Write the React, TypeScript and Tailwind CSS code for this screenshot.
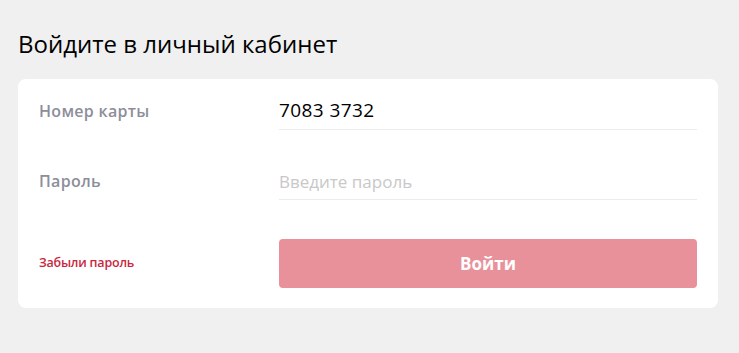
export default function App() {
  return (
    <div
      className="min-h-screen w-full bg-[#f0f0f0] px-[18px] pt-[28px]"
      style={{ fontFamily: '"Open Sans", "Noto Sans", sans-serif' }}
    >
      <h1 className="text-[24px] leading-[32px] font-medium text-black">Войдите в личный кабинет</h1>
      <div className="mt-[19px] w-[700px] rounded-[8px] bg-white px-[21px] pt-[12px] pb-[20px]">
        <div className="flex items-center">
          <div className="w-[240px] text-[16px] font-semibold tracking-[0.3px] text-[#8e8e9a]">Номер карты</div>
          <div className="flex h-[39px] flex-1 items-center border-b border-[#ececec] text-[19px] tracking-[0.4px] text-black">
            7083 3732
          </div>
        </div>
        <div className="mt-[31px] flex items-center">
          <div className="w-[240px] text-[16px] font-semibold tracking-[0.3px] text-[#8e8e9a]">Пароль</div>
          <input
            type="password"
            placeholder="Введите пароль"
            className="h-[39px] flex-1 border-b border-[#ececec] pt-[2px] text-[17px] text-black outline-none placeholder:text-[#c8c8c8]"
          />
        </div>
        <div className="mt-[39px] flex items-center">
          <a className="w-[240px] text-[12.5px] font-semibold tracking-[-0.2px] text-[#c8283e]">Забыли пароль</a>
          <button className="h-[49px] flex-1 rounded-[4px] bg-[#e8919a] text-[17px] font-bold text-white">
            Войти
          </button>
        </div>
      </div>
    </div>
  );
}
